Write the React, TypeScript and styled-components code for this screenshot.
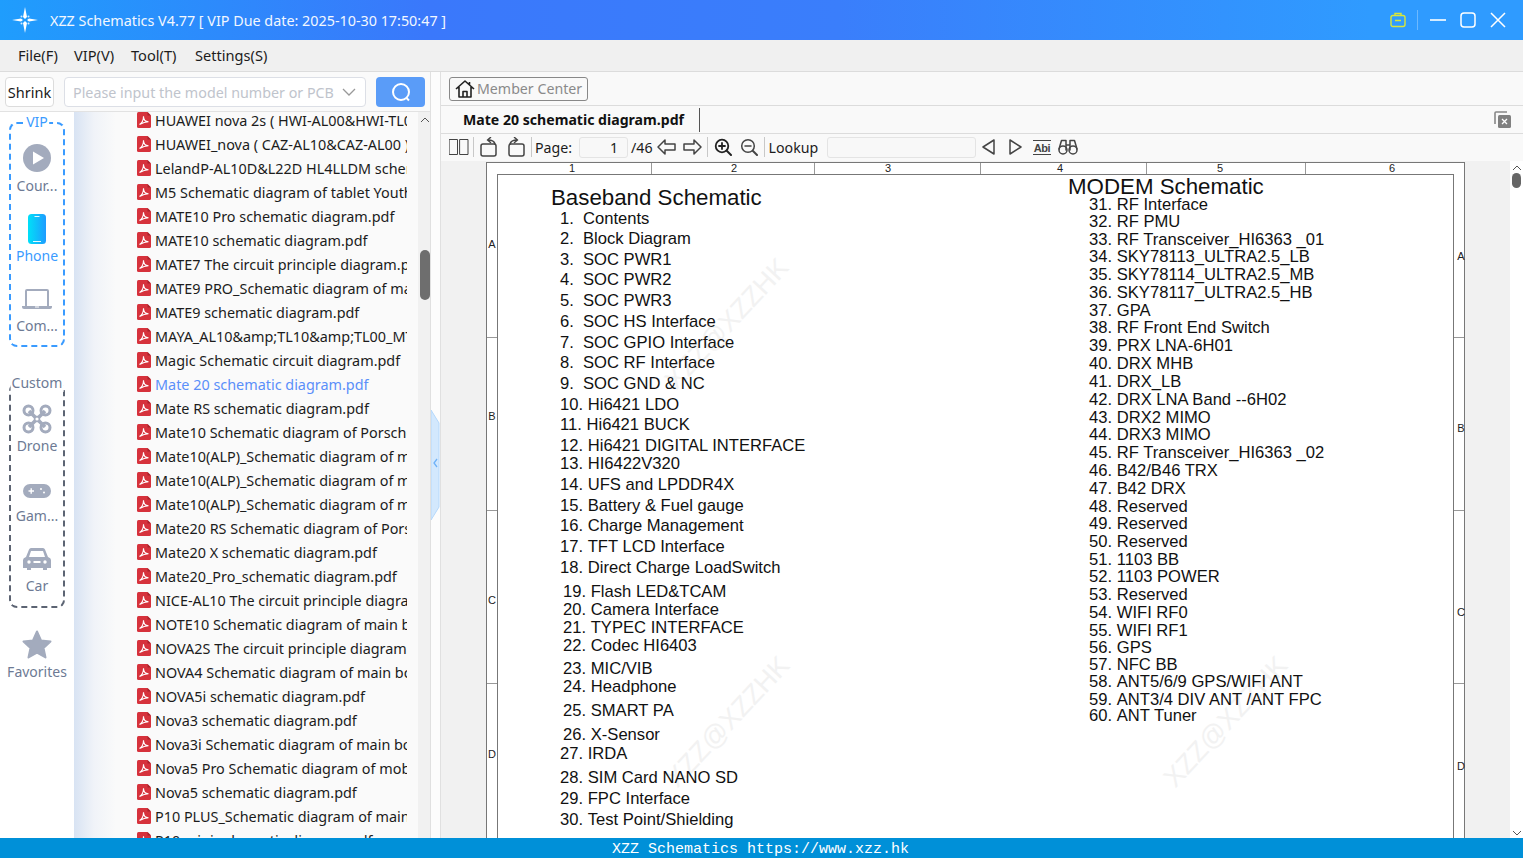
import React from "react";
import styled, { createGlobalStyle } from "styled-components";

const Global = createGlobalStyle`
  html, body { margin: 0; padding: 0; height: 100%; overflow: hidden; background: #fafafa; }
  #root { height: 100%; }
  * { box-sizing: border-box; }
`;

const UI = `"Noto Sans", "Open Sans", sans-serif`;

const Shell = styled.div`
  height: 858px; width: 1523px; display: flex; flex-direction: column;
  font-family: ${UI}; overflow: hidden;
`;
const TitleBar = styled.header`
  height: 40px; flex: none; display: flex; align-items: center; color: #f2f7ff;
  background: linear-gradient(90deg, #1f9dfd 0%, #3a78fb 28%, #3a7efb 55%, #2f9bff 90%);
  padding-left: 12px;
`;
const TitleText = styled.div`
  font-size: 14.35px; margin-left: 12px; white-space: nowrap; flex: 1;
`;
const WinButtons = styled.div`
  display: flex; align-items: center; height: 40px; width: 140px;
`;
const WinBtn = styled.span<{ $w: number }>`
  display: flex; justify-content: center; align-items: center; width: ${p => p.$w}px;
`;
const WinDivider = styled.span`
  width: 1px; height: 20px; background: rgba(255,255,255,.3); margin: 0 5px 0 4px;
`;
const MenuBar = styled.nav`
  height: 32px; flex: none; background: #f0f0f0; border-bottom: 1px solid #dcdcdc;
  display: flex; align-items: center; padding: 0 0 2px 18px; gap: 16px;
  font-size: 14.6px; color: #1c1c1c;
`;
const MenuItem = styled.span<{ $w: number }>`
  width: ${p => p.$w}px; white-space: nowrap; flex: none;
`;
const Main = styled.div`
  flex: 1; display: flex; min-height: 0;
`;
const LeftPanel = styled.aside`
  width: 431px; flex: none; display: flex; flex-direction: column; background: #fafafa;
  border-right: 1px solid #e0e0e0;
`;
const SearchRow = styled.div`
  height: 40px; flex: none; display: flex; align-items: center; padding: 0 5px;
`;
const Shrink = styled.button`
  width: 49px; height: 30px; border: 1px solid #dcdcdc; border-radius: 4px; background: #fff;
  padding: 0; font: 14.5px ${UI}; color: #1a1a1a; margin-right: 10px;
`;
const SearchInput = styled.div`
  width: 302px; height: 30px; border: 1px solid #dcdfe6; border-radius: 4px; background: #fff;
  display: flex; align-items: center; justify-content: space-between; padding: 0 9px 0 8px;
  font-size: 14.3px; color: #c0c4cc; white-space: nowrap; margin-right: 10px;
`;
const SearchBtn = styled.button`
  width: 49px; height: 30px; border: none; border-radius: 4px; background: #5a9cf8; padding: 0;
  display: flex; align-items: center; justify-content: center;
`;
const LeftBody = styled.div`
  flex: 1; display: flex; min-height: 0; position: relative; box-shadow: 0 -1px 0 #e2e2e2;
`;
const Rail = styled.div`
  width: 74px; flex: none; background: #fff; display: flex; flex-direction: column;
  align-items: center; padding-top: 10px;
`;
const Group = styled.div<{ $c: string; $mb: number; $pt: number }>`
  position: relative; width: 56px; height: 225px; flex: none; border: 2px dashed ${p => p.$c};
  border-radius: 8px; display: flex; flex-direction: column; align-items: center;
  padding-top: ${p => p.$pt}px; margin-bottom: ${p => p.$mb}px;
`;
const GroupLabel = styled.span<{ $c: string }>`
  position: absolute; top: -11px; left: 50%; transform: translateX(-50%); background: #fff;
  font-size: 14px; line-height: 18px; color: ${p => p.$c}; padding: 0 1px; white-space: nowrap;
`;
const RailItem = styled.div<{ $active?: boolean }>`
  height: 70px; flex: none; display: flex; flex-direction: column; align-items: center;
  font-size: 14px; line-height: 18px; color: ${p => p.$active ? "#3a9bff" : "#6d7a94"};
  white-space: nowrap;
`;
const RailIcon = styled.span<{ $dy?: number }>`
  height: 30px; display: flex; align-items: center; justify-content: center; margin-bottom: 3px;
  svg { margin-top: ${p => p.$dy ?? 0}px; }
`;
const FileArea = styled.div`
  flex: 1; position: relative; overflow: hidden; display: flex;
  background: linear-gradient(90deg, #d8e3f3 0, #f0f3f8 20px, #fafafa 42px);
`;
const FileList = styled.ul`
  list-style: none; margin: -4px 0 0; padding: 0 0 0 63px; width: 333px; flex: none; overflow: hidden;
`;
const FileRow = styled.li<{ $active?: boolean }>`
  height: 24px; display: flex; align-items: center; gap: 4px; font-size: 14.4px; white-space: nowrap;
  color: ${p => p.$active ? "#5b8ff9" : "#1c1c1c"};
`;
const FileName = styled.span`
  overflow: hidden; width: 252px; flex: none;
`;
const ListScroll = styled.div`
  position: absolute; right: 0; top: 0; bottom: 0; width: 12px; background: #f1f1f1;
`;
const Thumb = styled.span`
  position: absolute; left: 2px; top: 138px; width: 10px; height: 50px; border-radius: 5px; background: #6e6e6e;
`;
const UpArrow = styled.span`
  position: absolute; left: 2px; top: 4px; display: block; line-height: 0;
`;
const Splitter = styled.div`
  width: 10px; flex: none; background: #fcfcfc; border-right: 1px solid #e0e0e0;
  display: flex; align-items: center;
`;
const RightPanel = styled.section`
  flex: 1; min-width: 0; display: flex; flex-direction: column; background: #f9f9f9;
`;
const MemberRow = styled.div`
  height: 34px; flex: none; border-bottom: 1px solid #dcdcdc; padding: 5px 0 0 8px;
`;
const MemberBtn = styled.button`
  width: 139px; height: 24px; border: 1px solid #888; border-radius: 3px; background: #f9f9f9;
  display: flex; align-items: center; padding: 0 0 2px 5px; gap: 2px;
  font: 14.2px ${UI}; color: #8a8a8a; white-space: nowrap;
`;
const TabRow = styled.div`
  height: 28px; flex: none; border-bottom: 1px solid #dcdcdc; display: flex; align-items: center;
  justify-content: space-between; padding: 0 11px 0 0;
`;
const Tab = styled.div`
  width: 259px; height: 24px; border-right: 1px solid #555; padding-left: 22px;
  font-size: 14.1px; font-weight: 700; line-height: 24px; color: #111; white-space: nowrap;
`;
const Toolbar = styled.div`
  height: 27px; flex: none; display: flex; align-items: center; padding: 0 0 1px 8px; font-size: 14.2px; color: #1c1c1c;
`;
const ToolIcon = styled.span<{ $w: number; $ml?: number }>`
  display: flex; align-items: center; justify-content: center; width: ${p => p.$w}px;
  margin-left: ${p => p.$ml ?? 0}px; flex: none;
`;
const Sep = styled.span<{ $ml: number; $mr: number }>`
  width: 1px; height: 20px; background: #c8c8c8; margin: 0 ${p => p.$mr}px 0 ${p => p.$ml}px; flex: none;
`;
const ToolInput = styled.div<{ $w: number; $ml: number }>`
  width: ${p => p.$w}px; height: 21px; margin-left: ${p => p.$ml}px; border: 1px solid #e4e4e4; border-radius: 3px;
  background: #f8f8f8; text-align: right; padding-right: 9px; line-height: 19px; flex: none;
`;
const ToolText = styled.span<{ $ml?: number }>`
  margin-left: ${p => p.$ml ?? 0}px; white-space: nowrap; flex: none;
`;
const Viewer = styled.div`
  flex: 1; min-height: 0; display: flex; background: #f1f1f1; overflow: hidden;
`;
const ViewGutter = styled.div`
  flex: 1; min-width: 0; padding: 1px 0 0 45px; overflow: hidden;
`;
const Page = styled.div`
  position: relative; width: 979px; height: 700px; background: #fff;
  border: 1px solid #777; border-bottom: none; font-family: "Liberation Sans", Arial, sans-serif; color: #111;
`;
const Inner = styled.div`
  position: absolute; left: 10px; top: 11px; width: 957px; height: 700px; border: 1px solid #777;
`;
const Mark = styled.span`
  position: absolute; font-size: 11px; line-height: 12px; color: #222; transform: translate(-50%, -50%);
`;
const Tick = styled.span`
  position: absolute; background: #999;
`;
const SheetHeading = styled.div`
  position: absolute; font-size: 22.3px; line-height: 26px; white-space: nowrap; transform: translateY(-50%);
`;
const SheetLine = styled.div`
  position: absolute; font-size: 16.6px; line-height: 18px; white-space: nowrap; transform: translateY(calc(-50% + 1px));
`;
const Num = styled.span`
  display: inline-block; min-width: 23px;
`;
const Watermark = styled.div`
  position: absolute; font-size: 27px; color: #f2f2f2; white-space: nowrap; transform: translate(-50%, -50%) rotate(-47deg);
`;
const VScroll = styled.div`
  width: 13px; flex: none; background: #fff; position: relative;
`;
const VThumb = styled.span`
  position: absolute; left: 2px; top: 12px; width: 9px; height: 15px; border-radius: 5px; background: #666;
`;
const VArrow = styled.span<{ $bottom?: boolean }>`
  position: absolute; left: 2px; line-height: 0; ${p => p.$bottom ? "bottom: 2px;" : "top: 4px;"}
`;
const Footer = styled.footer`
  height: 20px; flex: none; background: #0090d8; color: #fff; text-align: center; overflow: hidden;
  font: 15px/23px "Liberation Mono", "DejaVu Sans Mono", monospace; padding-right: 2px;
`;

const PdfIcon = () => (
  <svg width="14" height="16" viewBox="0 0 14 16" style={{ flex: "none" }}>
    <path d="M1.5 0H10.5L14 3.5V14.5Q14 16 12.5 16H1.5Q0 16 0 14.5V1.5Q0 0 1.5 0Z" fill="#d6323c" />
    <path d="M10.5 0L14 3.5H10.5Z" fill="#a8222b" />
    <path d="M2.5 12.5C5 11 6.5 7 6.5 4.2c0 3 2 5.4 5 5.6-3 0-6 1-9 2.7Z" fill="none" stroke="#fff" strokeWidth="1.1" />
  </svg>
);

const files = [
  "HUAWEI nova 2s ( HWI-AL00&HWI-TL00 ) schematic diagram.pdf",
  "HUAWEI_nova ( CAZ-AL10&CAZ-AL00 ) schematic diagram.pdf",
  "LelandP-AL10D&L22D HL4LLDM schematic diagram.pdf",
  "M5 Schematic diagram of tablet Youth Edition.pdf",
  "MATE10 Pro schematic diagram.pdf",
  "MATE10 schematic diagram.pdf",
  "MATE7 The circuit principle diagram.pdf",
  "MATE9 PRO_Schematic diagram of main board.pdf",
  "MATE9 schematic diagram.pdf",
  "MAYA_AL10&amp;TL10&amp;TL00_MT6735.pdf",
  "Magic Schematic circuit diagram.pdf",
  "Mate 20 schematic diagram.pdf",
  "Mate RS schematic diagram.pdf",
  "Mate10 Schematic diagram of Porsche.pdf",
  "Mate10(ALP)_Schematic diagram of main.pdf",
  "Mate10(ALP)_Schematic diagram of main.pdf",
  "Mate10(ALP)_Schematic diagram of main.pdf",
  "Mate20 RS Schematic diagram of Porsche.pdf",
  "Mate20 X schematic diagram.pdf",
  "Mate20_Pro_schematic diagram.pdf",
  "NICE-AL10 The circuit principle diagram.pdf",
  "NOTE10 Schematic diagram of main board.pdf",
  "NOVA2S The circuit principle diagram of main.pdf",
  "NOVA4 Schematic diagram of main board.pdf",
  "NOVA5i schematic diagram.pdf",
  "Nova3 schematic diagram.pdf",
  "Nova3i Schematic diagram of main board.pdf",
  "Nova5 Pro Schematic diagram of mobile.pdf",
  "Nova5 schematic diagram.pdf",
  "P10 PLUS_Schematic diagram of main board.pdf",
  "P10 mini schematic diagram.pdf",
];

const PAGE_X = 487;
const PAGE_Y = 163;

const left: [number, string, number, number][] = [
  [1,"Contents",218,560],[2,"Block Diagram",238,560],[3,"SOC PWR1",259,560],[4,"SOC PWR2",279,560],
  [5,"SOC PWR3",300,560],[6,"SOC HS Interface",321,560],[7,"SOC GPIO Interface",342,560],[8,"SOC RF Interface",362,560],
  [9,"SOC GND & NC",383,560],[10,"Hi6421 LDO",404,560],[11,"Hi6421 BUCK",424,560],[12,"Hi6421 DIGITAL INTERFACE",445,560],
  [13,"HI6422V320",463,560],[14,"UFS and LPDDR4X",484,560],[15,"Battery & Fuel gauge",505,560],[16,"Charge Management",525,560],
  [17,"TFT LCD Interface",546,560],[18,"Direct Charge LoadSwitch",567,560],[19,"Flash LED&TCAM",591,563],[20,"Camera Interface",609,563],
  [21,"TYPEC INTERFACE",627,563],[22,"Codec HI6403",645,563],[23,"MIC/VIB",668,563],[24,"Headphone",686,563],
  [25,"SMART PA",710,563],[26,"X-Sensor",734,563],[27,"IRDA",753,560],[28,"SIM Card NANO SD",777,560],
  [29,"FPC Interface",798,560],[30,"Test Point/Shielding",819,560],
];
const rightNames = ["RF Interface","RF PMU","RF Transceiver_HI6363 _01","SKY78113_ULTRA2.5_LB","SKY78114_ULTRA2.5_MB","SKY78117_ULTRA2.5_HB","GPA","RF Front End Switch","PRX LNA-6H01","DRX MHB","DRX_LB","DRX LNA Band --6H02","DRX2 MIMO","DRX3 MIMO","RF Transceiver_HI6363 _02","B42/B46 TRX","B42 DRX","Reserved","Reserved","Reserved","1103 BB","1103 POWER","Reserved","WIFI RF0","WIFI RF1","GPS","NFC BB","ANT5/6/9 GPS/WIFI ANT","ANT3/4 DIV ANT /ANT FPC","ANT Tuner"];
const rightY = [204,221,239,256,274,292,310,327,345,363,381,399,417,434,452,470,488,506,523,541,559,576,594,612,630,647,664,681,699,715];

const S = { fill: "none", stroke: "#444", strokeWidth: 1.5, strokeLinejoin: "round" as const, strokeLinecap: "round" as const };

export default function App() {
  return (
    <Shell>
      <Global />
      <TitleBar>
        <svg width="26" height="26" viewBox="0 0 26 26" style={{ flex: "none" }}>
          <path d="M13 0L15 10L13 12L11 10Z M13 26L15 16L13 14L11 16Z M0 13L9 11.5L11 13L9 14.5Z M26 13L17 11.5L15 13L17 14.5Z" fill="#fff" />
          <circle cx="9.5" cy="9.5" r="1" fill="#d6ecff" /><circle cx="16.5" cy="9.5" r="1" fill="#d6ecff" />
          <circle cx="9.5" cy="16.5" r="1" fill="#d6ecff" /><circle cx="16.5" cy="16.5" r="1" fill="#d6ecff" />
        </svg>
        <TitleText>XZZ Schematics V4.77 [ VIP Due date: 2025-10-30 17:50:47 ]</TitleText>
        <WinButtons>
          <WinBtn $w={30}>
            <svg width="16" height="16" viewBox="0 0 16 16" fill="none" stroke="#d9e63a" strokeWidth="1.4">
              <rect x="1" y="3.5" width="14" height="11" rx="2" /><path d="M5 3.5V1.5H11V3.5M5 8.5H11" />
            </svg>
          </WinBtn>
          <WinDivider />
          <WinBtn $w={30}><svg width="16" height="16" viewBox="0 0 16 16"><path d="M0 8H16" stroke="#fff" strokeWidth="1.6" /></svg></WinBtn>
          <WinBtn $w={30}><svg width="16" height="16" viewBox="0 0 16 16"><rect x="1" y="1" width="14" height="14" rx="3" fill="none" stroke="#fff" strokeWidth="1.5" /></svg></WinBtn>
          <WinBtn $w={30}><svg width="16" height="16" viewBox="0 0 16 16"><path d="M1 1L15 15M15 1L1 15" stroke="#fff" strokeWidth="1.5" /></svg></WinBtn>
        </WinButtons>
      </TitleBar>
      <MenuBar>
        <MenuItem $w={40}>File(F)</MenuItem>
        <MenuItem $w={41}>VIP(V)</MenuItem>
        <MenuItem $w={48}>Tool(T)</MenuItem>
        <MenuItem $w={72}>Settings(S)</MenuItem>
      </MenuBar>
      <Main>
        <LeftPanel>
          <SearchRow>
            <Shrink>Shrink</Shrink>
            <SearchInput>
              <span>Please input the model number or PCB</span>
              <svg width="14" height="14" viewBox="0 0 14 14"><path d="M1 4L7 10L13 4" fill="none" stroke="#999" strokeWidth="1.3" /></svg>
            </SearchInput>
            <SearchBtn>
              <svg width="20" height="20" viewBox="0 0 20 20" fill="none" stroke="#fff" strokeWidth="2">
                <circle cx="10" cy="10" r="8" /><path d="M15.5 16L18 18.5" />
              </svg>
            </SearchBtn>
          </SearchRow>
          <LeftBody>
            <Rail>
              <Group $c="#3a9bff" $mb={36} $pt={20}>
                <GroupLabel $c="#3a9bff">VIP</GroupLabel>
                <RailItem>
                  <RailIcon $dy={-2}><svg width="28" height="28" viewBox="0 0 28 28"><circle cx="14" cy="14" r="14" fill="#a3abbd" /><path d="M10 7.5L21 14L10 20.5Z" fill="#fff" /></svg></RailIcon>
                  Cour...
                </RailItem>
                <RailItem $active>
                  <RailIcon>
                    <svg width="18" height="30" viewBox="0 0 18 30">
                      <defs><linearGradient id="ph" x1="0" x2="1"><stop offset="0" stopColor="#00e0f8" /><stop offset="1" stopColor="#1e9cff" /></linearGradient></defs>
                      <rect width="18" height="30" rx="3.5" fill="url(#ph)" />
                      <path d="M6.5 2.5H11.5M5 27.5H13" stroke="#e6fbff" strokeWidth="1" />
                    </svg>
                  </RailIcon>
                  Phone
                </RailItem>
                <RailItem>
                  <RailIcon>
                    <svg width="30" height="20" viewBox="0 0 30 20">
                      <path d="M4 17V2Q4 1 5 1H25Q26 1 26 2V17" fill="none" stroke="#a3abbd" strokeWidth="2" />
                      <path d="M0 17H30V18Q30 20 28 20H2Q0 20 0 18Z" fill="#a3abbd" />
                      <path d="M13 18H17" stroke="#fff" strokeWidth="1" />
                    </svg>
                  </RailIcon>
                  Com...
                </RailItem>
              </Group>
              <Group $c="#5c6473" $mb={22} $pt={19}>
                <GroupLabel $c="#6d7a94">Custom</GroupLabel>
                <RailItem>
                  <RailIcon>
                    <svg width="30" height="30" viewBox="0 0 30 30" fill="none" stroke="#a3abbd">
                      <circle cx="6.5" cy="6.5" r="4.5" strokeWidth="3" /><circle cx="23.5" cy="6.5" r="4.5" strokeWidth="3" />
                      <circle cx="6.5" cy="23.5" r="4.5" strokeWidth="3" /><circle cx="23.5" cy="23.5" r="4.5" strokeWidth="3" />
                      <path d="M7 7L23 23M23 7L7 23" strokeWidth="3.6" />
                      <circle cx="15" cy="15" r="2.4" fill="#fff" strokeWidth="1.6" />
                    </svg>
                  </RailIcon>
                  Drone
                </RailItem>
                <RailItem>
                  <RailIcon $dy={4}>
                    <svg width="28" height="14" viewBox="0 0 28 14">
                      <rect width="28" height="14" rx="7" fill="#a3abbd" />
                      <path d="M5.5 7H11M8.2 4.2V9.8" stroke="#fff" strokeWidth="1.4" />
                      <circle cx="18" cy="5" r="1" fill="#fff" /><circle cx="21" cy="8.5" r="1" fill="#fff" />
                    </svg>
                  </RailIcon>
                  Gam...
                </RailItem>
                <RailItem>
                  <RailIcon>
                    <svg width="28" height="24" viewBox="0 0 28 24">
                      <path d="M3 10L6 2.5Q6.6 1 8 1H20Q21.4 1 22 2.5L25 10Q28 11 28 13V21H24V23H20V21H8V23H4V21H0V13Q0 11 3 10Z" fill="#a3abbd" />
                      <path d="M6 10L8 4H20L22 10Z" fill="#fff" />
                      <circle cx="6" cy="15" r="1.7" fill="#fff" /><circle cx="22" cy="15" r="1.7" fill="#fff" />
                      <rect x="10.5" y="14" width="7" height="2" fill="#fff" />
                    </svg>
                  </RailIcon>
                  Car
                </RailItem>
              </Group>
              <RailItem>
                <RailIcon>
                  <svg width="30" height="30" viewBox="0 0 30 30">
                    <path d="M15 1.5L19 10.5L28.5 11.5L21.5 18L23.5 27.5L15 22.7L6.5 27.5L8.5 18L1.5 11.5L11 10.5Z" fill="#a3abbd" stroke="#a3abbd" strokeWidth="2" strokeLinejoin="round" />
                  </svg>
                </RailIcon>
                Favorites
              </RailItem>
            </Rail>
            <FileArea>
              <FileList>
                {files.map((f, i) => (
                  <FileRow key={i} $active={f.startsWith("Mate 20")}>
                    <PdfIcon />
                    <FileName>{f}</FileName>
                  </FileRow>
                ))}
              </FileList>
              <ListScroll>
                <UpArrow><svg width="10" height="8" viewBox="0 0 10 8"><path d="M1 6L5 2L9 6" fill="none" stroke="#555" strokeWidth="1" /></svg></UpArrow>
                <Thumb />
              </ListScroll>
            </FileArea>
          </LeftBody>
        </LeftPanel>
        <Splitter>
          <svg width="9" height="110" viewBox="0 0 9 110" style={{ marginTop: 20 }}>
            <path d="M0 0L8 13V97L0 110Z" fill="#d3e8fd" stroke="#b5d8fb" strokeWidth="1" />
            <path d="M6 49L3 53L6 57" fill="none" stroke="#6fb2f8" strokeWidth="1.3" />
          </svg>
        </Splitter>
        <RightPanel>
          <MemberRow>
            <MemberBtn>
              <svg width="20" height="20" viewBox="0 0 20 20" fill="none" stroke="#222" strokeWidth="1.6" strokeLinejoin="round" style={{ flex: "none", marginBottom: -2 }}>
                <path d="M1 10L10 2L19 10M4 8V18H16V8M8 18V12.5H12V18M14.5 3V6" />
              </svg>
              Member Center
            </MemberBtn>
          </MemberRow>
          <TabRow>
            <Tab>Mate 20 schematic diagram.pdf</Tab>
            <svg width="18" height="18" viewBox="0 0 18 18">
              <path d="M1 13V2Q1 1 2 1H13" fill="none" stroke="#888" strokeWidth="1.6" />
              <rect x="4" y="4" width="13" height="13" rx="1.5" fill="#808080" />
              <path d="M8 8L13 13M13 8L8 13" stroke="#fff" strokeWidth="1.3" />
            </svg>
          </TabRow>
          <Toolbar>
            <ToolIcon $w={20}><svg width="20" height="16" viewBox="0 0 20 16" {...S} strokeWidth={1}><rect x=".5" y=".5" width="8" height="15" /><rect x="11" y=".5" width="8" height="15" /></svg></ToolIcon>
            <Sep $ml={4} $mr={5} />
            <ToolIcon $w={20}>
              <svg width="20" height="20" viewBox="0 0 20 20" {...S}><rect x="2" y="7" width="15" height="12" rx="2" /><path d="M16 7Q15 3 9 3M11.5 .5L8.5 3L11.5 5.5" /></svg>
            </ToolIcon>
            <ToolIcon $w={20} $ml={7}>
              <svg width="20" height="20" viewBox="0 0 20 20" {...S}><rect x="3" y="7" width="15" height="12" rx="2" /><path d="M4 7Q5 3 11 3M8.5 .5L11.5 3L8.5 5.5" /></svg>
            </ToolIcon>
            <Sep $ml={5} $mr={3} />
            <ToolText>Page:</ToolText>
            <ToolInput $w={49} $ml={7}>1</ToolInput>
            <ToolText $ml={3}>/46</ToolText>
            <ToolIcon $w={20} $ml={4}><svg width="19" height="16" viewBox="0 0 19 16" {...S}><path d="M8 1L1 8L8 15V11H18V5H8Z" /></svg></ToolIcon>
            <ToolIcon $w={20} $ml={6}><svg width="19" height="16" viewBox="0 0 19 16" {...S}><path d="M11 1L18 8L11 15V11H1V5H11Z" /></svg></ToolIcon>
            <Sep $ml={4} $mr={6} />
            <ToolIcon $w={18}><svg width="18" height="18" viewBox="0 0 18 18" {...S} stroke="#222"><circle cx="8" cy="8" r="6.3" strokeWidth="1.8" /><path d="M13 13L17 17" strokeWidth="2" /><path d="M5 8H11M8 5V11" strokeWidth="1.8" /></svg></ToolIcon>
            <ToolIcon $w={18} $ml={8}><svg width="18" height="18" viewBox="0 0 18 18" {...S}><circle cx="8" cy="8" r="6.3" /><path d="M13 13L17 17" strokeWidth="2" /><path d="M5 8H11" /></svg></ToolIcon>
            <Sep $ml={6} $mr={4} />
            <ToolText>Lookup</ToolText>
            <ToolInput $w={149} $ml={9} />
            <ToolIcon $w={14} $ml={5}><svg width="13" height="16" viewBox="0 0 13 16" {...S}><path d="M12 1V15L1 8Z" /></svg></ToolIcon>
            <ToolIcon $w={14} $ml={13}><svg width="13" height="16" viewBox="0 0 13 16" {...S}><path d="M1 1V15L12 8Z" /></svg></ToolIcon>
            <ToolIcon $w={20} $ml={10}>
              <svg width="20" height="15" viewBox="0 0 20 15">
                <path d="M1 .5H19M1 14.5H19" stroke="#444" strokeWidth="1" />
                <text x="10" y="11.5" textAnchor="middle" fontSize="11" fontWeight="700" fontFamily="Liberation Sans" fill="#444" letterSpacing="-.4">Abi</text>
              </svg>
            </ToolIcon>
            <ToolIcon $w={20} $ml={6}>
              <svg width="20" height="16" viewBox="0 0 20 16" {...S}>
                <circle cx="5" cy="11" r="4" /><circle cx="15" cy="11" r="4" /><path d="M1 10L3.5 1.5H8V11M19 10L16.5 1.5H12V11M8 6H12" />
              </svg>
            </ToolIcon>
          </Toolbar>
          <Viewer>
            <ViewGutter>
              <Page>
                <Mark style={{ left: 572 - PAGE_X, top: 5 }}>1</Mark>
                <Mark style={{ left: 734 - PAGE_X, top: 5 }}>2</Mark>
                <Mark style={{ left: 888 - PAGE_X, top: 5 }}>3</Mark>
                <Mark style={{ left: 1060 - PAGE_X, top: 5 }}>4</Mark>
                <Mark style={{ left: 1220 - PAGE_X, top: 5 }}>5</Mark>
                <Mark style={{ left: 1392 - PAGE_X, top: 5 }}>6</Mark>
                {[651, 814, 980, 1146, 1305].map(x => <Tick key={x} style={{ left: x - PAGE_X, top: 0, width: 1, height: 11 }} />)}
                {[337, 510, 683].map(y => (
                  <React.Fragment key={y}>
                    <Tick style={{ left: 0, top: y - PAGE_Y, width: 10, height: 1 }} />
                    <Tick style={{ left: 966, top: y - PAGE_Y, width: 11, height: 1 }} />
                  </React.Fragment>
                ))}
                {([["A", 244, 256], ["B", 416, 428], ["C", 600, 612], ["D", 754, 766]] as const).map(([l, a, b]) => (
                  <React.Fragment key={l}>
                    <Mark style={{ left: 492 - PAGE_X, top: a - PAGE_Y }}>{l}</Mark>
                    <Mark style={{ left: 1461 - PAGE_X, top: b - PAGE_Y }}>{l}</Mark>
                  </React.Fragment>
                ))}
                <Inner />
                <Watermark style={{ left: 727 - PAGE_X, top: 324 - PAGE_Y }}>XZZ@XZZHK</Watermark>
                <Watermark style={{ left: 728 - PAGE_X, top: 722 - PAGE_Y }}>XZZ@XZZHK</Watermark>
                <Watermark style={{ left: 1226 - PAGE_X, top: 722 - PAGE_Y }}>XZZ@XZZHK</Watermark>
                <SheetHeading style={{ left: 551 - PAGE_X, top: 198 - PAGE_Y }}>Baseband Schematic</SheetHeading>
                <SheetHeading style={{ left: 1068 - PAGE_X, top: 187 - PAGE_Y }}>MODEM Schematic</SheetHeading>
                {left.map(([n, t, y, x]) => (
                  <SheetLine key={n} style={{ left: x - PAGE_X, top: y - PAGE_Y }}>
                    <Num>{n}.{"\u00a0"}</Num>{t}
                  </SheetLine>
                ))}
                {rightNames.map((t, i) => (
                  <SheetLine key={t + i} style={{ left: 1089 - PAGE_X, top: rightY[i] - PAGE_Y }}>
                    <Num>{i + 31}.{"\u00a0"}</Num>{t}
                  </SheetLine>
                ))}
              </Page>
            </ViewGutter>
            <VScroll>
              <VArrow><svg width="10" height="7" viewBox="0 0 10 7"><path d="M1 5L5 1L9 5" fill="none" stroke="#555" strokeWidth="1" /></svg></VArrow>
              <VThumb />
              <VArrow $bottom><svg width="10" height="7" viewBox="0 0 10 7"><path d="M1 2L5 6L9 2" fill="none" stroke="#555" strokeWidth="1" /></svg></VArrow>
            </VScroll>
          </Viewer>
        </RightPanel>
      </Main>
      <Footer>XZZ Schematics https://www.xzz.hk</Footer>
    </Shell>
  );
}
